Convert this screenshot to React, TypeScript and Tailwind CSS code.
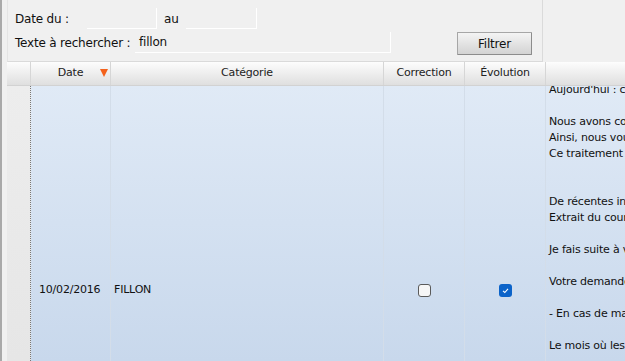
import React from "react";

const font = { fontFamily: '"DejaVu Sans", Verdana, sans-serif' };

const lines = [
  "Aujourd'hui : constat de la situation",
  "",
  "Nous avons constaté une anomalie",
  "Ainsi, nous vous proposons",
  "Ce traitement répond à la demande",
  "",
  "",
  "De récentes informations",
  "Extrait du courrier reçu",
  "",
  "Je fais suite à votre demande",
  "",
  "Votre demande a bien été prise",
  "",
  "- En cas de maintien",
  "",
  "Le mois où les lignes",
  "",
  "",
];

export default function App() {
  return (
    <div
      className="w-[625px] h-[361px] overflow-hidden bg-[#f0f0f0] flex text-[#111] tracking-[-0.2px]"
      style={font}
    >
      <div className="w-[2px] h-full bg-[#a9a9a9]" />
      <div className="w-[5px] h-full bg-[#f0f0f0]" />
      <div className="flex-1 flex flex-col min-w-0">
        {/* filter panel */}
        <div className="flex h-[62px] shrink-0">
          <div className="w-[536px] h-[62px] border-r border-b border-[#dadada] border-l border-l-[#e4e4e4] pl-[7px] flex flex-col text-[12px]">
            <div className="flex items-center h-[21px] mt-[8px]">
              <span className="w-[72px]">Date du :</span>
              <div className="w-[70px] h-[21px] border-r border-b border-white" />
              <span className="w-[22px] ml-[7px]">au</span>
              <div className="w-[71px] h-[21px] border-r border-b border-white" />
            </div>
            <div className="flex items-start mt-[3px]">
              <span className="w-[120px] h-[21px] flex items-center">Texte à rechercher :</span>
              <div className="w-[256px] h-[21px] border-r border-b border-white pl-[4px] flex items-center">
                fillon
              </div>
              <button
                className="ml-[66px] w-[75px] h-[23px] border border-[#a6a6a6] border-b-[#8c8c8c] border-r-[#8c8c8c] bg-gradient-to-b from-[#f4f4f4] to-[#d3d3d3] text-[12px] flex items-center justify-center rounded-[1px]"
                style={font}
              >
                Filtrer
              </button>
            </div>
          </div>
          <div className="flex-1" />
        </div>

        {/* grid header */}
        <div className="grid grid-cols-[24px_80px_273px_81px_81px_1fr] h-[24px] shrink-0 bg-gradient-to-b from-[#fdfdfd] to-[#dfdfdf] border-b border-[#d2d2d2] text-[11px] text-[#222]">
          <div className="border-r border-[#d6d6d6]" />
          <div className="relative border-r border-[#d6d6d6] flex items-center justify-center">
            Date
            <svg className="absolute right-[2px] top-[6px]" width="8" height="9" viewBox="0 0 8 9">
              <polygon points="0,1 8,1 4,9" fill="#f4621c" />
            </svg>
          </div>
          <div className="border-r border-[#d6d6d6] flex items-center justify-center">Catégorie</div>
          <div className="border-r border-[#d6d6d6] flex items-center justify-center">Correction</div>
          <div className="border-r border-[#d6d6d6] flex items-center justify-center">Évolution</div>
          <div />
        </div>

        {/* grid body */}
        <div className="flex-1 overflow-hidden grid grid-cols-[24px_80px_273px_81px_81px_1fr] text-[11px] bg-gradient-to-b from-[#e0eaf6] to-[#c8d8ec]">
          <div className="bg-gradient-to-b from-[#ededed] to-[#e6e6e6] border-r border-dotted border-[#777]" />
          <div className="border-r border-[#d3dde9] pl-[8px] pt-[196px] leading-[16px]">10/02/2016</div>
          <div className="border-r border-[#d3dde9] pl-[3px] pt-[196px] leading-[16px]">FILLON</div>
          <div className="border-r border-[#d3dde9] flex justify-center pt-[198px]">
            <div className="w-[13px] h-[13px] rounded-[3px] border border-[#5a5a5a] bg-[#f6f6f6]" />
          </div>
          <div className="border-r border-[#d3dde9] flex justify-center pt-[198px]">
            <div className="w-[13px] h-[13px] rounded-[3px] bg-[#0b63c9] flex items-center justify-center">
              <svg width="9" height="9" viewBox="0 0 9 9">
                <polyline points="2,4.8 3.8,6.5 7,2.8" fill="none" stroke="white" strokeWidth="1.1" />
              </svg>
            </div>
          </div>
          <div className="pl-[3px] -mt-[4px] leading-[16px] whitespace-nowrap overflow-hidden">
            {lines.map((l, i) => (
              <div key={i} className="h-[16px]">
                {l}
              </div>
            ))}
          </div>
        </div>
      </div>
    </div>
  );
}
